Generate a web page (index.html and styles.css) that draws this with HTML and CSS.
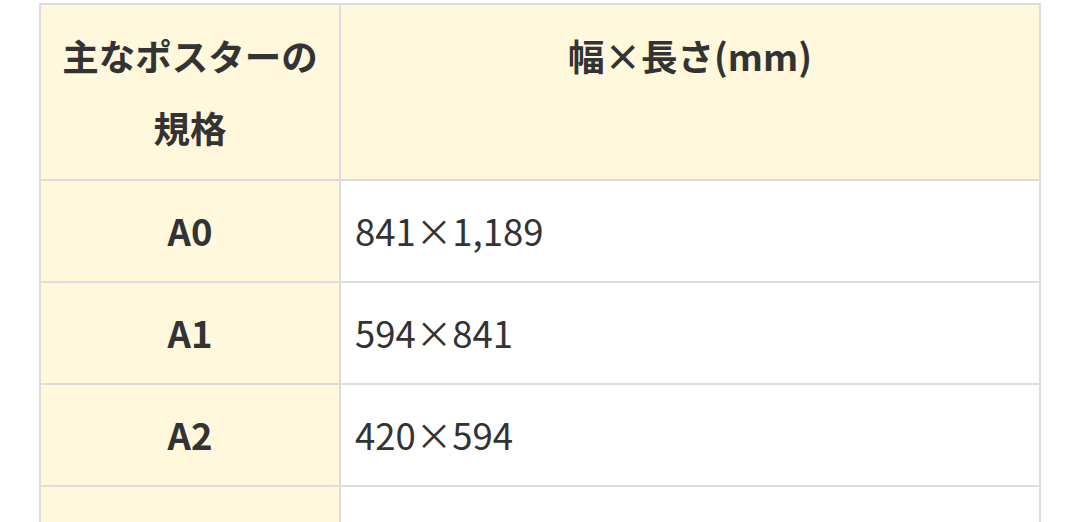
FILE: index.html
```html
<!DOCTYPE html>
<html lang="ja">
<head>
<meta charset="utf-8">
<link rel="stylesheet" href="styles.css">
</head>
<body>
<div class="wrap">
  <table class="spec">
    <colgroup>
      <col class="c1">
      <col class="c2">
    </colgroup>
    <thead>
      <tr>
        <th class="name">主なポスターの<br>規格</th>
        <th class="size">幅×長さ(mm)</th>
      </tr>
    </thead>
    <tbody>
      <tr><th class="name">A0</th><td>841×1,189</td></tr>
      <tr><th class="name">A1</th><td>594×841</td></tr>
      <tr><th class="name">A2</th><td>420×594</td></tr>
      <tr><th class="name">A3</th><td>297×420</td></tr>
    </tbody>
  </table>
</div>
</body>
</html>
```

FILE: styles.css
```css
html, body {
  margin: 0;
  padding: 0;
  background: #ffffff;
}
body {
  font-family: "Noto Sans CJK JP", "Noto Sans", sans-serif;
  color: #333333;
}
.wrap {
  padding: 3px 0 0 39px;
}
.spec {
  border-collapse: collapse;
  table-layout: fixed;
  width: 1002px;
}
.c1 { width: 300px; }
.c2 { width: 700px; }
.spec th,
.spec td {
  border: 2px solid #dddddd;
  font-size: 36.5px;
  line-height: 72px;
}
.spec thead th {
  background: #fff8dc;
  font-weight: 700;
  text-align: center;
  vertical-align: top;
  padding: 15px 14px;
}
.spec tbody th {
  background: #fff8dc;
  font-weight: 700;
  text-align: center;
  vertical-align: middle;
  padding: 14px 14px;
}
.spec tbody td {
  background: #ffffff;
  font-weight: 400;
  text-align: left;
  vertical-align: middle;
  padding: 14px 14px;
}
```
